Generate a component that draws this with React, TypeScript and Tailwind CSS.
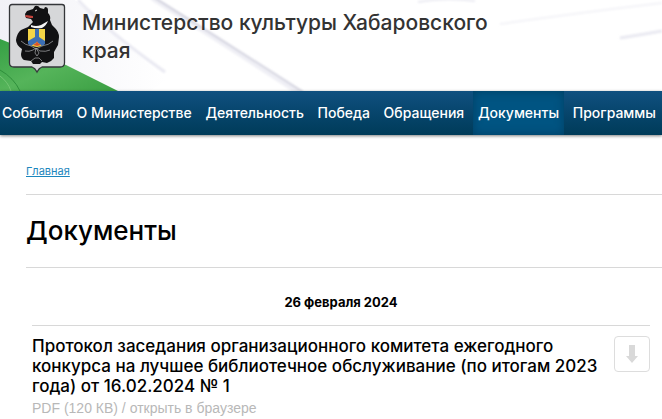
import React from 'react';

interface MenuItem {
    label: string;
    active?: boolean;
}

interface DocumentEntry {
    title: string;
    type: string;
    size: string;
}

const menu: MenuItem[] = [
    { label: 'События' },
    { label: 'О Министерстве' },
    { label: 'Деятельность' },
    { label: 'Победа' },
    { label: 'Обращения' },
    { label: 'Документы', active: true },
    { label: 'Программы' },
];

const documents: DocumentEntry[] = [
    {
        title: 'Протокол заседания организационного комитета ежегодного конкурса на лучшее библиотечное обслуживание (по итогам 2023 года) от 16.02.2024 № 1',
        type: 'PDF',
        size: '120 КВ',
    },
];

const Emblem: React.FC = () => (
    <svg viewBox="0 0 58 72" className="w-[58px] h-[72px] shrink-0" role="img" aria-label="Герб Хабаровского края">
        <path
            d="M4 1.5H54Q56.5 1.5 56.5 4V60Q56.5 64 52 64H34Q31 65 29 69Q27 65 24 64H6Q1.500 64 1.500 60V4Q1.500 1.500 4 1.500Z"
            fill="#d6d7d9"
            stroke="#34363a"
            strokeWidth="1.300"
        />
        {/* Bear */}
        <path
            d="M17 11L19 8L25 6L27 3Q30 2 32 5L36 6L37 4Q40 4 40 7L40 10Q43 13 42 17L44 22L47 25Q51 29 51 34L50 42L46 49L46 55Q43 59 39 60L34 59L32 61H25L23 58L16 57Q13 55 13 51L14 46Q8 42 8 37Q9 30 13 27L20 24L25 19L23 16L18 15Z"
            fill="#111113"
        />
        <path d="M18 12L25 13L25 15L22 15L17 14Z" fill="#c0413a" />
        <path d="M27 8L29 7" stroke="#e5e5e5" strokeWidth="1" />
        <path d="M23 22Q28 24 33 22L40 18Q38 23 34 25Q28 26 23 24Z" fill="#f4f4f4" />
        {/* Small shield held by the bear */}
        <path d="M20 26H37V40Q35 43 29 44Q22 43 20 40Z" fill="#f4d547" />
        <path d="M27 26H31V34L37 38V41L34 43L29 39L23 43L20 41V38L27 34Z" fill="#3b6eb4" />
        <path d="M25 42L28 40L29 38L30 40L33 42L29 43Z" fill="#d9552b" />
        <path
            d="M13 38Q17 42 23 43L28 46L34 43Q41 42 45 38M17 48Q21 49 25 47L28 45L32 48Q38 49 42 47M28 45L31 50L29 53L27 50ZM23 58L27 55L31 55L34 58"
            fill="none"
            stroke="#a9abad"
            strokeWidth="0.700"
        />
    </svg>
);

const HeaderBackdrop: React.FC = () => (
    <svg
        className="absolute inset-0 w-full h-full"
        viewBox="0 0 662 91"
        preserveAspectRatio="xMinYMin slice"
        aria-hidden="true"
    >
        <defs>
            <linearGradient id="leaf" x1="0" y1="0" x2="1" y2="1">
                <stop offset="0" stopColor="#35a044" />
                <stop offset="0.5" stopColor="#55b45a" />
                <stop offset="1" stopColor="#3b9f43" />
            </linearGradient>
            <linearGradient id="fold" x1="0" y1="0" x2="1" y2="0">
                <stop offset="0" stopColor="#f1f1f7" />
                <stop offset="1" stopColor="#ffffff" />
            </linearGradient>
            <filter id="soft">
                <feGaussianBlur stdDeviation="0.8" />
            </filter>
        </defs>
        <path d="M0 0H75L118 38L166 80L150 91H60L0 40Z" fill="url(#fold)" />
        <path d="M0 39L66 65L118 91H0Z" fill="url(#leaf)" />
        <path d="M0 70Q14 78 20 91" fill="none" stroke="#2f8f3c" strokeWidth="1" />
        <path d="M0 76Q8 82 11 91" fill="none" stroke="#74c574" strokeWidth="1" />
        <g filter="url(#soft)" fill="none">
            <path d="M78 0Q108 32 165 72" stroke="#e8e8f1" strokeWidth="3" />
            <path d="M152 -2Q226 45 298 92" stroke="#efeff5" strokeWidth="5" />
            <path d="M155 -2Q230 45 303 92" stroke="#cbcbd9" strokeWidth="1.500" />
            <path d="M418 2Q445 -3 475 1" stroke="#ebebf2" strokeWidth="2" />
            <path d="M500 24Q585 12 662 3" stroke="#f3f3f7" strokeWidth="2" />
            <path d="M620 38Q640 35 662 31" stroke="#e9e9f1" strokeWidth="3" />
        </g>
    </svg>
);

const DocumentRow: React.FC<{ entry: DocumentEntry }> = ({ entry }) => (
    <article className="flex items-start gap-2 border-t border-[#d8d8d8] pt-2.5">
        <div className="flex-1 min-w-0">
            <h2 className="text-[17px] leading-5 font-medium">{entry.title}</h2>
            <p className="mt-0.5 text-[14px] leading-5 text-[#b8b8b8] font-['Liberation_Sans',Arial,sans-serif]">
                {entry.type} ({entry.size}) / <a href="#open">открыть в браузере</a>
            </p>
        </div>
        <button
            type="button"
            aria-label="Скачать"
            className="flex items-center justify-center w-9 h-9 shrink-0 rounded-sm border border-[#dddddd] bg-white"
        >
            <svg viewBox="0 0 12 18" className="w-3 h-[18px]" aria-hidden="true">
                <path d="M3 0H9V11H12L6 18L0 11H3Z" fill="#d9d9d9" />
            </svg>
        </button>
    </article>
);

const App: React.FC = () => {
    return (
        <div className="w-full overflow-x-hidden bg-white text-black font-[Inter,'Liberation_Sans',sans-serif]">
            {/* Header */}
            <header className="relative overflow-hidden">
                <HeaderBackdrop />
                <div className="relative flex items-start gap-4 pl-2 pt-[3px] pb-4">
                    <Emblem />
                    <div className="max-w-[440px] pt-1.5 text-[21px] leading-7 font-medium text-[#333333]">
                        Министерство культуры Хабаровского края
                    </div>
                </div>
            </header>

            {/* Main menu */}
            <nav className="relative bg-linear-to-b from-[#105080] to-[#003b59] shadow-[0_1px_3px_rgba(0,0,0,0.5)]">
                <ul className="flex justify-between -ml-[3px] pr-px">
                    {menu.map((item) => (
                        <li key={item.label}>
                            <a
                                href="#menu"
                                className={`block px-[5px] text-[14px] leading-[44px] font-medium whitespace-nowrap text-white ${
                                    item.active ? 'bg-[#005482] shadow-[inset_0_0_10px_rgba(0,50,80,0.6)]' : ''
                                }`}
                            >
                                {item.label}
                            </a>
                        </li>
                    ))}
                </ul>
            </nav>

            <main className="pl-[26px]">
                {/* Breadcrumbs */}
                <div className="pt-7 pb-3.5 text-[11px] leading-[17px]">
                    <a href="#home" className="text-[#1c86bd] underline">Главная</a>
                </div>

                <h1 className="border-y border-[#d8d8d8] py-[18px] text-[26px] leading-9 font-medium">Документы</h1>

                {/* Documents grouped by date */}
                <section className="pl-1.5 pr-3">
                    <div className="pt-6 pb-[13px] text-center text-[13px] leading-5 font-bold">26 февраля 2024</div>
                    {documents.map((entry) => (
                        <DocumentRow key={entry.title} entry={entry} />
                    ))}
                </section>
            </main>
        </div>
    );
};

export default App;
